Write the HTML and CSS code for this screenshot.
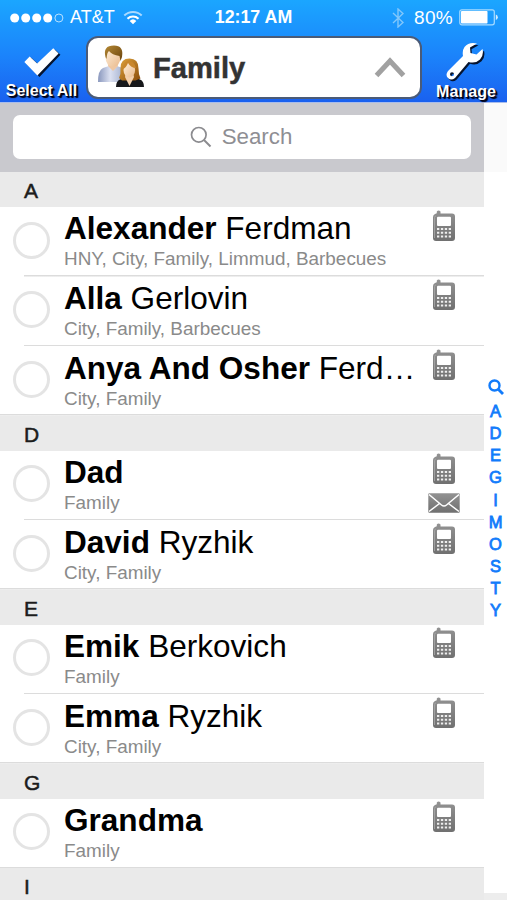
FILE: index.html
```html
<!DOCTYPE html>
<html lang="en">
<head>
<meta charset="utf-8">
<title>Family</title>
<link rel="stylesheet" href="styles.css">
</head>
<body>
<svg class="defs" aria-hidden="true">
  <defs>
    <linearGradient id="metal" x1="0" y1="0" x2="0" y2="1"><stop offset="0" stop-color="#929292"/><stop offset="1" stop-color="#707070"/></linearGradient>
    <symbol id="phone" viewBox="0 0 24 32">
      <path d="M4.800 1.500Q6.500-.3 8.500 1.500v2h11.500q3 0 3 3v21.500q0 3-3 3h-16q-3 0-3-3V7q0-2 2-3l1.800-.8z" fill="url(#metal)"/>
      <path d="M2.500 28V7.500q0-1.500 1.500-1.500" fill="none" stroke="#aaa" stroke-width=".8"/>
      <rect x="5" y="6.800" width="14" height="9.200" rx="1" fill="#fff"/>
      <path d="M5 19h14M5 22.800h14M5 26.600h14" stroke="#eee" stroke-width="2" stroke-dasharray="2.300 1.600"/>
    </symbol>
    <symbol id="mail" viewBox="0 0 32 20">
      <rect x=".3" y=".3" width="31.400" height="19.400" rx="1" fill="url(#metal)"/>
      <path d="M1 1.500l12.500 10.500q2.500 2 5 0L31 1.500M1 18.500l10.500-8M31 18.500l-10.500-8" fill="none" stroke="#fff" stroke-width="1.500"/>
    </symbol>
  </defs>
</svg>
<div class="app">
  <header class="header">
    <div class="status">
      <div class="carrier">
        <svg class="dots" viewBox="0 0 54 10"><g fill="#fff"><circle cx="4.700" cy="5" r="4.500"/><circle cx="15.700" cy="5" r="4.500"/><circle cx="26.700" cy="5" r="4.500"/><circle cx="37.700" cy="5" r="4.500"/></g><circle cx="48.900" cy="5" r="4" fill="none" stroke="#b9e2ff"/></svg>
        <span>AT&amp;T</span>
        <svg class="wifi" viewBox="0 0 20 15"><path d="M1.300 5.500a12.500 12.500 0 0 1 17.400 0" fill="none" stroke="#a9d9ff" stroke-width="2"/><path d="M4.500 8.700a8 8 0 0 1 11 0" fill="none" stroke="#fff" stroke-width="2.200"/><path d="M6.700 10.900a4.800 4.800 0 0 1 6.600 0L10 14.200z" fill="#fff"/></svg>
      </div>
      <span class="time">12:17 AM</span>
      <div class="power">
        <svg class="bluetooth" viewBox="0 0 12 20"><path d="M1 5l10 9.500-5 4.500V1l5 4.500L1 15" fill="none" stroke="#82c7fb" stroke-width="1.400"/></svg>
        <span class="percent">80%</span>
        <svg class="battery" viewBox="0 0 40 17"><rect x=".8" y=".8" width="34.500" height="15" rx="2" fill="none" stroke="#a8dbff" stroke-width="1.200"/><rect x="2" y="2" width="26.500" height="12.600" rx=".8" fill="#fff"/><path d="M36.800 5.500q2 .8 2 2.800t-2 2.800z" fill="#d4edff"/></svg>
      </div>
    </div>
    <nav class="toolbar">
      <div class="action select">
        <svg class="check" viewBox="1 0 36 29"><path d="M4.500 15.700l4.800-5 6.800 6.300L30.700 3.200l5 4.800-19 20z" fill="#06142f"/><path d="M3 14.500l4.800-5 6.800 6.300L29.200 2l4.800 4.800-19.200 20z" fill="#fff"/></svg>
        <span>Select All</span>
      </div>
      <div class="group">
        <svg class="people" viewBox="0 0 48 45">
          <defs>
            <linearGradient id="shirt" x2="1"><stop stop-color="#8997bd"/><stop offset=".45" stop-color="#dce1f1"/><stop offset="1" stop-color="#9dabca"/></linearGradient>
            <linearGradient id="brown" x2="1" y2="1"><stop stop-color="#b68a35"/><stop offset="1" stop-color="#68410b"/></linearGradient>
            <linearGradient id="auburn" x2="1" y2="1"><stop stop-color="#dfa33b"/><stop offset="1" stop-color="#8a4c0c"/></linearGradient>
            <linearGradient id="skin" x2="1" y2="1"><stop stop-color="#fff0dc"/><stop offset="1" stop-color="#e9b98b"/></linearGradient>
          </defs>
          <path d="M1 38q0-12 5-14l6-2h8l8 3v13z" fill="url(#shirt)"/>
          <path d="M11 22l5 5 5-5-1-5h-8z" fill="#efc7a2"/>
          <ellipse cx="16" cy="13.500" rx="7.500" ry="9.500" fill="url(#skin)"/>
          <path d="M8.500 13Q5.500 1.500 17 1.500 27 1.500 25 13l-1.500 4-1-5Q15 11 12 7q-2 1-2.500 8z" fill="url(#brown)"/>
          <path d="M19 43q0-6 4-7.500l6-2.500h8l6 2.500q4 1.500 4 7.500z" fill="#17181b"/>
          <path d="M22 34q2-4 1.500-10 0-9.500 9-9.500 9 0 9 10 0 6 2 10l-5 2H25z" fill="url(#auburn)"/>
          <path d="M28 33l4.500 9 4.500-9-1-4h-7z" fill="#f3d0ad"/>
          <ellipse cx="32.300" cy="26" rx="5.800" ry="7.500" fill="url(#skin)"/>
          <path d="M26 25q3-1 5-6 3 5 8 5-2-7-7-7t-6 8z" fill="#c9872d"/>
        </svg>
        <span class="group-name">Family</span>
        <svg class="chevron" viewBox="0 0 32 22"><path d="M2.500 18.500L16 4l13.500 14.500" fill="none" stroke="#a1a1a1" stroke-width="5"/></svg>
      </div>
      <div class="action manage">
        <svg class="wrench" viewBox="0 0 40 40"><defs><path id="tool" fill-rule="evenodd" d="M31 1.500Q23-.500 18.500 5q-2.500 3.500-1.500 9L2 29q-3 4 0 7t7 0L22.500 20q7 2 11.500-2.500 4-4 2.500-10.500l-6 5.500-6-1.500-.5-5.500zM6 30.300a2 2 0 1 1 0 4 2 2 0 0 1 0-4z"/></defs><use href="#tool" x="1.500" y="1.800" fill="#06142f"/><use href="#tool" fill="#fff"/></svg>
        <span>Manage</span>
      </div>
    </nav>
  </header>
  <div class="content">
    <main class="contacts">
      <div class="searchbar"><div class="search">
        <svg class="glass" viewBox="0 0 22 22"><circle cx="8.800" cy="8.800" r="7.300" fill="none" stroke="#8b8b8f" stroke-width="1.700"/><path d="M14 14l6.500 6.500" stroke="#8b8b8f" stroke-width="2"/></svg>
        <span>Search</span>
      </div></div>
      <h2>A</h2>
      <div class="row"><i class="radio"></i><div class="person"><p class="name"><b>Alexander</b> Ferdman</p><p class="tags">HNY, City, Family, Limmud, Barbecues</p></div><div class="icons"><svg class="phone"><use href="#phone"/></svg></div></div>
      <div class="row"><i class="radio"></i><div class="person"><p class="name"><b>Alla</b> Gerlovin</p><p class="tags">City, Family, Barbecues</p></div><div class="icons"><svg class="phone"><use href="#phone"/></svg></div></div>
      <div class="row last"><i class="radio"></i><div class="person"><p class="name"><b>Anya And Osher</b> Ferd…</p><p class="tags">City, Family</p></div><div class="icons"><svg class="phone"><use href="#phone"/></svg></div></div>
      <h2>D</h2>
      <div class="row"><i class="radio"></i><div class="person"><p class="name"><b>Dad</b></p><p class="tags">Family</p></div><div class="icons"><svg class="phone"><use href="#phone"/></svg><svg class="mail"><use href="#mail"/></svg></div></div>
      <div class="row last"><i class="radio"></i><div class="person"><p class="name"><b>David</b> Ryzhik</p><p class="tags">City, Family</p></div><div class="icons"><svg class="phone"><use href="#phone"/></svg></div></div>
      <h2>E</h2>
      <div class="row"><i class="radio"></i><div class="person"><p class="name"><b>Emik</b> Berkovich</p><p class="tags">Family</p></div><div class="icons"><svg class="phone"><use href="#phone"/></svg></div></div>
      <div class="row last"><i class="radio"></i><div class="person"><p class="name"><b>Emma</b> Ryzhik</p><p class="tags">City, Family</p></div><div class="icons"><svg class="phone"><use href="#phone"/></svg></div></div>
      <h2>G</h2>
      <div class="row last"><i class="radio"></i><div class="person"><p class="name"><b>Grandma</b></p><p class="tags">Family</p></div><div class="icons"><svg class="phone"><use href="#phone"/></svg></div></div>
      <h2>I</h2>
    </main>
    <aside class="index">
      <svg viewBox="0 0 16 16"><circle cx="6.500" cy="6.500" r="5" fill="none" stroke="#117bfb" stroke-width="2.400"/><path d="M10 10l5 5" stroke="#117bfb" stroke-width="2.800"/></svg>
      <span>A</span><span>D</span><span>E</span><span>G</span><span>I</span><span>M</span><span>O</span><span>S</span><span>T</span><span>Y</span>
    </aside>
  </div>
</div>
</body>
</html>
```
FILE: styles.css
```css
* { box-sizing: border-box; }
body { margin: 0; font-family: "Liberation Sans", Arial, sans-serif; background: #fff; }
svg { display: block; flex: none; }
p, h2 { margin: 0; }
.defs { position: absolute; width: 0; height: 0; }
.app { width: 507px; height: 900px; overflow: hidden; display: flex; flex-direction: column; }

.header { height: 103px; flex: none; background: linear-gradient(#1ba6ff, #1b83fb 55%, #1a61ef); border-bottom: 1px solid #a9bdec; color: #fff; }
.status { height: 35px; display: grid; grid-template-columns: 1fr auto 1fr; align-items: center; padding: 0 8px 0 10px; font-size: 18px; line-height: 35px; }
.carrier, .power { display: flex; align-items: center; }
.dots { width: 54px; height: 10px; margin-right: 6px; }
.wifi { width: 20px; height: 15px; margin-left: 8px; }
.time { font-weight: bold; font-size: 17.800px; margin-left: -2px; }
.power { justify-content: flex-end; }
.bluetooth { width: 12px; height: 20px; margin-right: 10px; }
.percent { font-size: 19px; letter-spacing: .3px; margin-right: 6px; }
.battery { width: 40px; height: 17px; }

.toolbar { display: grid; grid-template-columns: 86px 336px 85px; }
.action { display: flex; flex-direction: column; align-items: center; height: 66px; font-weight: bold; line-height: 18px; text-shadow: 1px 1px 1px #001, 2px 2px 1px #001; white-space: nowrap; }
.select { font-size: 16px; padding-right: 3px; }
.manage { font-size: 16.100px; padding-left: 3px; }
.check { width: 40px; height: 32px; margin: 11px 0 4px; }
.wrench { width: 40px; height: 40px; margin: 7px 0 0; }
.group { height: 63px; margin-top: 1px; border: 2px solid #4a5b78; border-radius: 12px; background: #fff; display: flex; align-items: center; padding: 0 14px 0 9px; }
.people { width: 48px; height: 45px; margin-top: -2px; }
.group-name { color: #333; font-size: 29.100px; font-weight: bold; margin-left: 8px; padding-top: 2px; flex: 1; -webkit-text-stroke: .5px #333; }
.chevron { width: 32px; height: 22px; }

.content { display: flex; flex: 1; min-height: 0; }
.contacts { width: 484px; flex: none; overflow: hidden; }
.searchbar { height: 69.400px; background: #c9c9ce; padding: 12px 13px 13px; }
.search { height: 44px; border-radius: 7px; background: #fff; display: flex; justify-content: center; align-items: center; color: #8e8e93; font-size: 22.300px; padding-right: 2px; }
.glass { width: 22px; height: 22px; margin-right: 10px; }
h2 { height: 34.800px; background: #eaeaea; padding: 0 24px; font-size: 21px; line-height: 37px; font-weight: normal; color: #1c1c1c; -webkit-text-stroke: .5px #1c1c1c; }
.row { height: 69.600px; display: flex; padding-left: 13px; background: linear-gradient(#dcdcdc, #dcdcdc) 24px 100% / 460px 1.500px no-repeat; }
.row.last { background-position: 0 100%; background-size: 484px 1.500px; }
.radio { width: 37px; height: 37px; border: 3px solid #e4e4e4; border-radius: 50%; margin: 14.500px 14px 0 0; flex: none; }
.person { width: 362px; white-space: nowrap; }
.name { font-size: 31.550px; line-height: 36px; margin-top: 3.200px; color: #000; }
.tags { font-size: 18.900px; line-height: 22px; margin-top: 2px; color: #8a8a8a; }
.icons { width: 36px; display: flex; flex-direction: column; align-items: center; gap: 8px; padding-top: 2.600px; }
.phone { width: 24px; height: 32px; }
.mail { width: 32px; height: 20px; }

.index { width: 23px; display: flex; flex-direction: column; align-items: center; padding-top: 276px; background: linear-gradient(#fafafa, #fafafa) 0 0 / 100% 69px no-repeat, linear-gradient(#ededed, #ededed) 0 100% / 100% 7px no-repeat, #fff; color: #117bfb; font-size: 16.500px; line-height: 22.130px; }
.index svg { width: 16px; height: 16px; margin-bottom: 5px; }
.index span { -webkit-text-stroke: .8px #117bfb; }
```
